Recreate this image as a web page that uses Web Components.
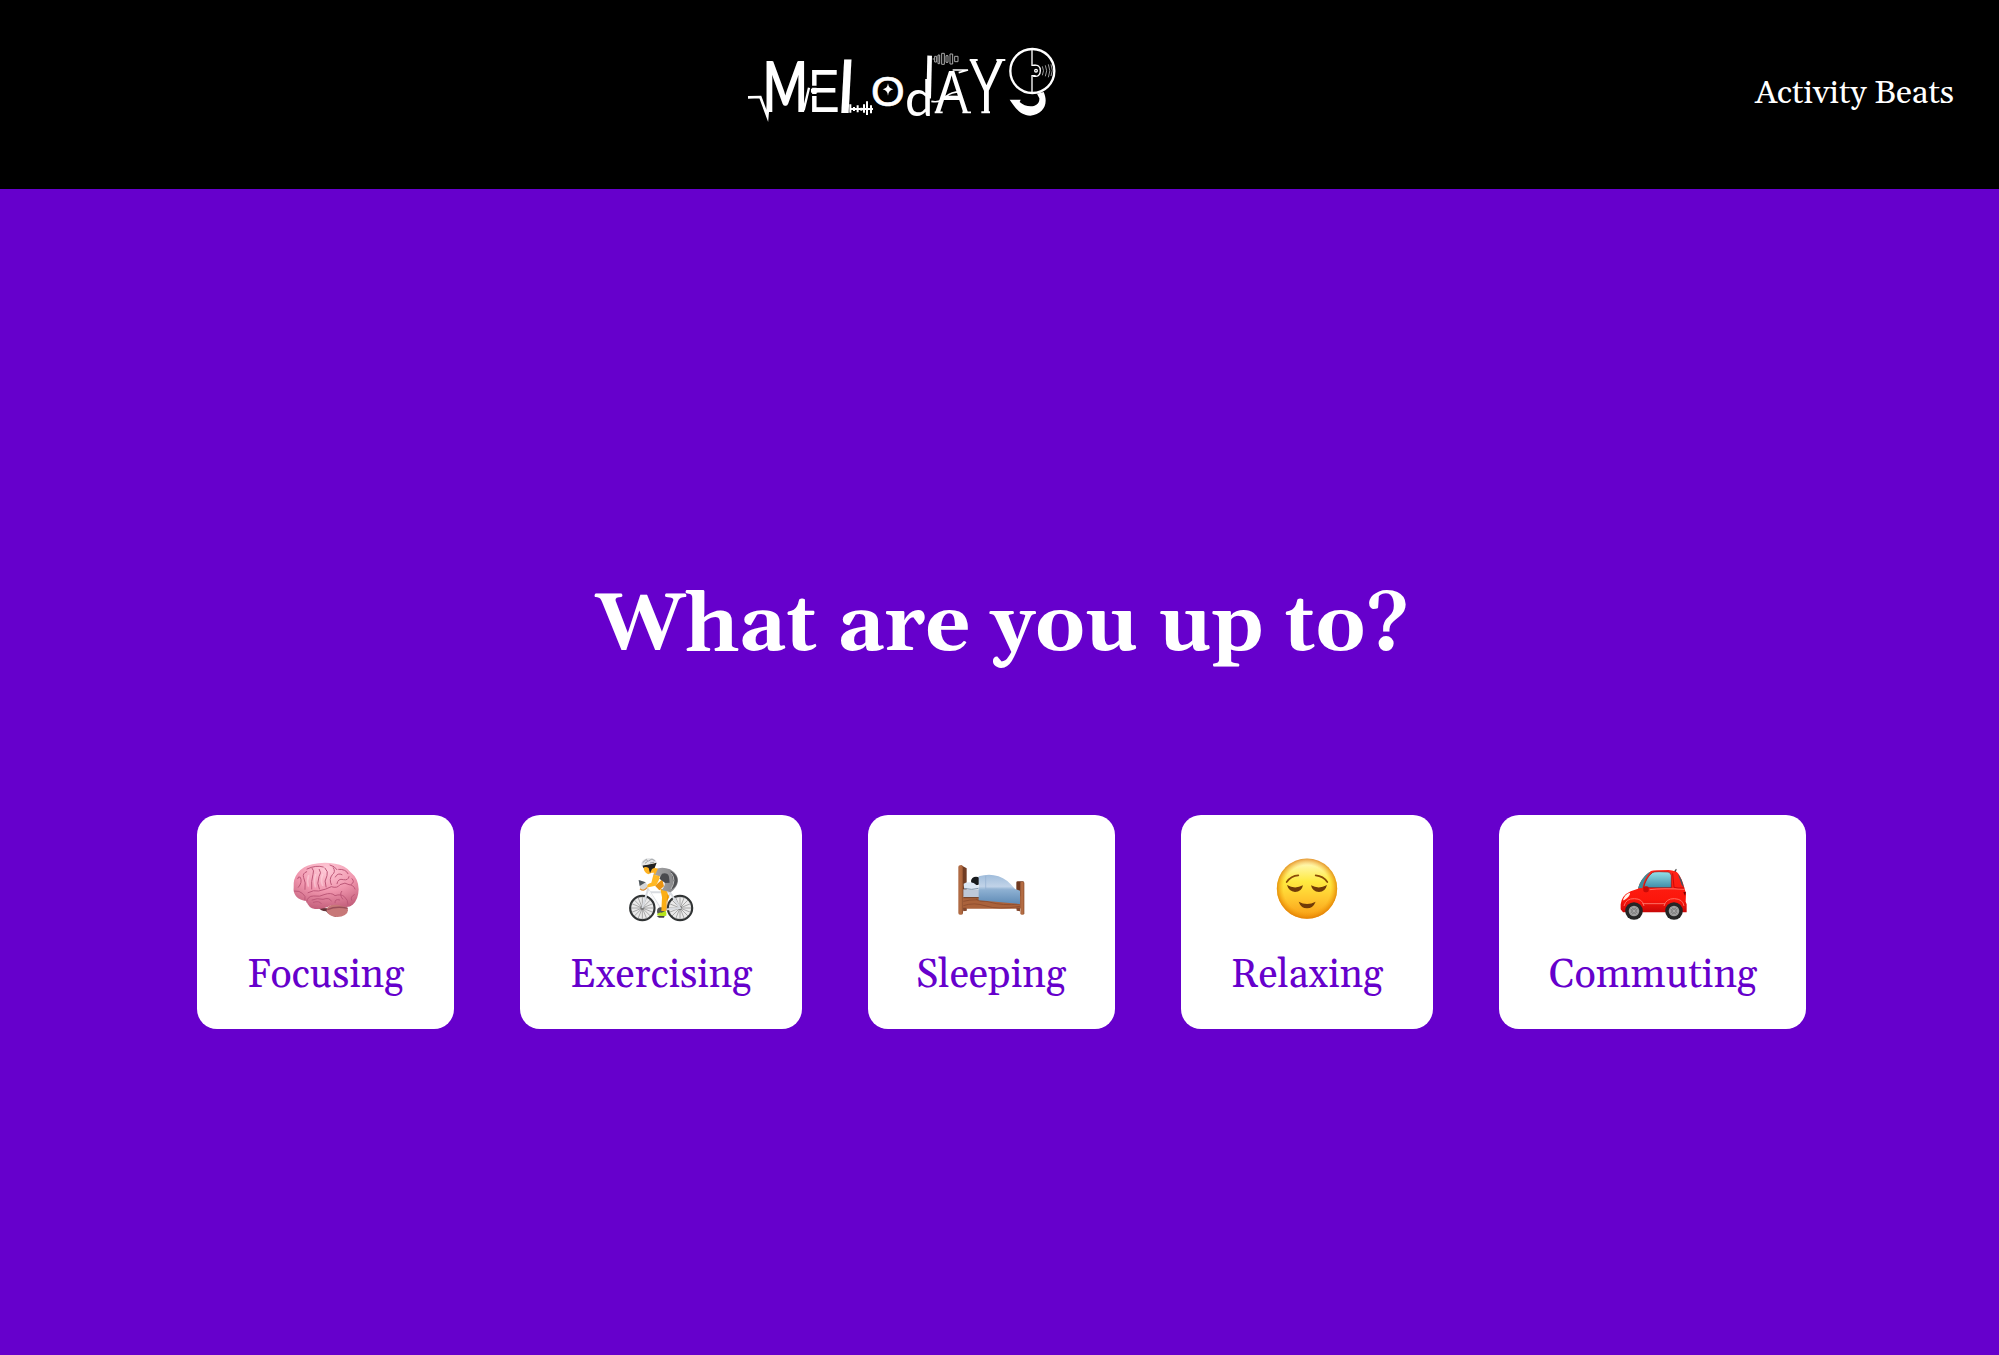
<!DOCTYPE html>
<html lang="en">
<head>
<meta charset="utf-8">
<title>Meloday</title>
<style>
html,body{margin:0;height:100%;background:#6600cc}
body{font-family:Georgia,Gelasio,"Liberation Serif",serif}
</style>
</head>
<body>
<melo-app></melo-app>
<script>
const define = (name, html, setup) => customElements.define(name, class extends HTMLElement {
  constructor() {
    super();
    this.attachShadow({ mode: 'open' }).innerHTML = html;
  }
  connectedCallback() { if (setup) setup(this); }
});

/* Text stretched to the width given in its "width" attribute. */
define('fit-text', `<style>:host{display:flex;white-space:nowrap}span{display:block;flex:none;transform-origin:0 0}</style><span><slot></slot></span>`, el => {
  const w = +el.getAttribute('width');
  el.style.width = w + 'px';
  const span = el.shadowRoot.querySelector('span');
  span.style.transform = `scaleX(${w / span.getBoundingClientRect().width})`;
});

define('melo-logo', `<style>:host{display:block;width:320px;height:100px}svg{display:block;width:100%;height:100%;overflow:visible}
text{fill:#fff;font-family:"Liberation Sans",sans-serif}</style>
<svg viewBox="0 0 960 300" role="img" aria-label="Meloday">
 <g fill="none" stroke="#fff" stroke-linejoin="miter">
  <path d="M24 187L61 186L82 243L90 150" stroke-width="8" stroke-miterlimit="8"/>
  <path d="M184 180L191 226L207 158" stroke-width="7"/>
 </g>
 <text style="font-family:Lato,sans-serif" transform="translate(68 230) scale(.67 1)" font-size="214" font-weight="bold">M</text>
 <text transform="translate(205 232) scale(.78 1)" font-size="181">E</text>
 <path d="M214 155H232M214 180H232" stroke="#000" stroke-width="6"/>
 <path d="M213 167H232" stroke="#fff" stroke-width="12"/>
 <text transform="translate(287 234) skewX(-3) scale(1.12 1)" font-size="222">l</text>
 <path d="M331 208V233M342 216V228M353 211V232M364 218V227M372 208V233M381 199V240M393 211V235M331 222H399" stroke="#fff" stroke-width="6"/>
 <text transform="translate(393 212)" font-size="130" stroke="#fff" stroke-width="2">O</text>
 <path d="M444 145Q446 161 460 163Q446 165 444 182Q442 165 428 163Q442 161 444 145Z" fill="#fff"/>
 <g transform="translate(480 0)">
  <text style="font-family:Lato,sans-serif" transform="translate(15 244)" font-size="152">d</text>
  <path d="M89 62L86 190" stroke="#fff" stroke-width="14"/>
  <g fill="none" stroke="#aaa" stroke-width="3"><path d="M98 72H104M104 64V81H110V64ZM114 60V86H119V60ZM125 55V88H133V55ZM138 62V82H144V62ZM150 57V87H158V57ZM164 64V80H174V64Z"/></g>
  <text transform="translate(106 232) scale(.82 1)" font-size="179">A</text>
  <path d="M94 199Q122 205 139 184Q153 171 181 170M104 232H128M187 232H213M158 105H204L176 113" stroke="#fff" stroke-width="5" fill="none"/>
  <text transform="translate(208 232) scale(.69 1)" font-size="224">Y</text>
  <path d="M209 75H233M289 75H316M244 232H270" stroke="#fff" stroke-width="6"/>
  <g fill="none" stroke="#fff"><circle cx="397" cy="108" r="66" stroke-width="7"/><path d="M396 44V91H407M396 174V122H407" stroke-width="4"/><path d="M399 91Q421 87 421 107Q421 128 399 123" stroke-width="4"/><path d="M427 94Q434 107 427 121M436 91Q444 107 436 124M445 88Q454 107 445 127M453 88Q461 107 453 123" stroke="#999" stroke-width="3"/></g>
  <circle cx="408" cy="107" r="6" fill="#fff"/><circle cx="408" cy="107" r="2"/>
  <path d="M329 194H362L359 201C378 220 420 220 418 190L411 176L431 171C447 206 430 239 391 242C360 242 344 216 329 194Z" fill="#fff"/>
 </g>
</svg>`);

define('melo-header', `<style>
:host{display:flex;height:189px;background:#000;color:#fff;box-sizing:border-box;padding:35px 45px 0 740px;justify-content:space-between;align-items:flex-start}
fit-text{font-size:32.5px;line-height:40px;margin-top:39px}
</style><melo-logo></melo-logo><fit-text width="199"><slot></slot></fit-text>`);

const icons = {
brain: `<svg viewBox="300 145 216 216"><defs><radialGradient id="b" cx=".5" cy=".15" r=".85"><stop stop-color="#ffcbd8"/><stop offset=".55" stop-color="#f095ad"/><stop offset="1" stop-color="#c4607c"/></radialGradient></defs>
<path d="M385 309L412 311L425 302L450 318L438 337Q420 333 408 320Q392 318 385 309Z" fill="#643238"/>
<ellipse cx="442" cy="317" rx="32" ry="20" fill="#c77878"/><path d="M412 315Q440 303 473 311" stroke="#994d59" stroke-width="4" fill="none"/>
<path d="M311 248Q309 223 323 205Q340 184 367 179Q400 170 435 177Q465 180 482 203Q505 221 506 254Q505 286 488 300Q475 311 456 304Q438 297 422 302Q403 315 375 313Q355 310 349 289Q330 288 318 275Q309 263 311 248Z" fill="url(#b)"/>
<g fill="none" stroke="#bd5878" stroke-width="3" stroke-linecap="round"><path d="M313 259Q329 258 337 266Q349 274 345 286M354 264Q371 255 386 259Q409 254 424 246Q442 252 450 240Q466 231 477 240Q490 240 495 253"/><path d="M350 292Q352 274 371 274Q391 277 402 270Q424 262 435 273Q453 267 463 276Q475 286 474 300M370 293Q389 287 394 297M366 286Q382 279 399 284Q418 277 424 289M435 294Q434 281 449 286M455 260Q447 270 458 283M493 270Q480 276 485 287"/><path d="M325 248Q338 233 331 218Q325 213 323 222M345 254Q348 232 341 219Q336 206 350 201M365 253Q363 230 369 209Q374 198 366 190M388 253Q379 237 387 216Q396 204 388 194M408 247Q401 228 411 213Q416 201 405 190M424 240Q416 223 427 210Q438 202 430 189M441 237Q444 220 460 225Q475 228 477 216M436 217Q443 203 456 210M446 194Q468 193 474 207M486 222Q496 232 484 239M351 193Q379 180 400 187M420 181Q434 184 441 195"/></g>
<path d="M356 213Q350 228 355 244M377 210Q371 227 376 246M398 210Q391 229 398 242" fill="none" stroke="#ffe0e7" stroke-width="5" stroke-linecap="round" opacity=".45"/></svg>`,
bike: `<svg viewBox="345 145 216 216"><defs><linearGradient id="s" x2="1"><stop stop-color="#a5a5a7"/><stop offset="1" stop-color="#858587"/></linearGradient></defs>
<g id="wheel"><circle cx="397" cy="310" r="36.5" fill="#e9e9e9" stroke="#303334" stroke-width="6.5"/><path d="M397 276V344M363 310H431M373 286L421 334M373 334L421 286M384 278L410 342M365 297L429 323M365 323L429 297M384 342L410 278" stroke="#858585" stroke-width="2"/><circle cx="397" cy="310" r="6" fill="#777"/></g><use href="#wheel" x="113"/>
<path d="M397 310L414 254L454 316L510 310L480 263L420 262M454 316L482 263" fill="none" stroke="#d8dbe0" stroke-width="6"/><path d="M416 258L449 312" stroke="#fafafa" stroke-width="4"/>
<circle cx="453" cy="320" r="12" fill="#555"/><path d="M440 334L465 331L462 339L447 339Z" fill="#444"/>
<path d="M468 255L478 278L470 288L467 319H454L456 278L451 252Z" fill="#fbae16"/><path d="M474 271L468 319" stroke="#dc8500" stroke-width="2"/><path d="M440 331Q447 322 455 324L467 318Q471 326 469 333Q452 336 440 331Z" fill="#b6e51b"/>
<path d="M435 243L457 224L462 245L448 257Z" fill="#ea9411"/>
<path d="M435 194Q456 184 480 194Q506 209 504 231Q500 249 482 263L454 256Q466 244 464 234L448 215L430 211Z" fill="url(#s)"/><path d="M456 207Q473 203 477 216L479 234L466 235L448 222Z" fill="#4a4b4f"/><path d="M481 198Q510 215 500 238Q496 249 484 255Q496 230 481 198Z" fill="#505154"/><path d="M484 205Q500 226 483 253" fill="none" stroke="#bbb" stroke-width="3"/>
<path d="M430 210L449 214Q448 231 436 243L409 249Q409 237 424 234Z" fill="#ffb824"/><path d="M386 226L407 233L413 244L401 256L390 250Z" fill="#d5d6d8"/><path d="M386 226L389 244L407 233Z" fill="#4e555a"/><path d="M390 252Q401 262 411 249" fill="none" stroke="#d98d36" stroke-width="4"/>
<path d="M401 184Q399 203 415 209L425 204L432 204L434 213L444 192L435 190L436 173Z" fill="#ffb321"/><path d="M397 182L440 174L434 189L426 193L420 206L416 190Q406 184 400 190Z" fill="#222"/>
<path d="M394 183Q392 164 414 161Q438 159 440 174Q423 179 394 183Z" fill="#e3e4e6"/><path d="M398 174L409 164L413 170L405 176M415 169L426 163L434 168M420 175L432 173" fill="none" stroke="#909599" stroke-width="2.5"/></svg>`,
bed: `<svg viewBox="287 145 216 216"><defs><linearGradient id="w"><stop stop-color="#ac6843"/><stop offset=".6" stop-color="#b66d42"/><stop offset="1" stop-color="#8d5030"/></linearGradient><linearGradient id="q" x2="0" y2="1"><stop stop-color="#9fbcdb"/><stop offset=".4" stop-color="#c1d3e8"/><stop offset=".52" stop-color="#8db0d2"/><stop offset="1" stop-color="#5f8bb6"/></linearGradient></defs>
<path d="M304 181L322 191V318H312V308H304Z" fill="#713d24"/><rect x="471" y="230" width="23" height="80" rx="4" fill="#70391f"/><path d="M311 275H484V312H311Z" fill="#aa623b"/><path d="M312 290Q350 280 390 292T481 298M312 303Q344 292 380 304T482 305M350 283Q366 296 386 286" fill="none" stroke="#8b4a2b" stroke-width="2.5"/>
<path d="M312 254H364V278H312Z" fill="#bdc8d9"/><path d="M312 279H364" stroke="#6c3b22" stroke-width="3"/><ellipse cx="350" cy="229" rx="15" ry="13" fill="#171a1d"/><path d="M313 237Q325 230 343 235L360 248Q350 257 314 250Z" fill="#dbe7f5"/><path d="M314 251Q338 257 358 251" fill="none" stroke="#8096ad" stroke-width="3"/>
<path d="M358 215Q405 200 444 229Q455 239 467 253L482 258V298L358 287Z" fill="url(#q)"/><path d="M379 213V253L467 254" stroke="#92afd0" stroke-width="2" fill="none"/>
<rect x="297" y="182" width="14" height="148" rx="5" fill="url(#w)"/><rect x="483" y="231" width="12" height="99" rx="4" fill="url(#w)"/><path d="M311 309H321V318L312 320ZM471 309H482V320L472 318Z" fill="#84482e"/></svg>`,
face: `<svg viewBox="304 145 216 216"><defs><linearGradient id="f" x2="0" y2="1"><stop stop-color="#fffbd8"/><stop offset=".14" stop-color="#fff59a"/><stop offset=".38" stop-color="#ffea40"/><stop offset=".68" stop-color="#ffc62e"/><stop offset="1" stop-color="#f79a14"/></linearGradient><radialGradient id="r"><stop offset=".78" stop-color="#f49b00" stop-opacity="0"/><stop offset="1" stop-color="#dc7800" stop-opacity=".75"/></radialGradient></defs><circle cx="412" cy="252" r="90.5" fill="url(#f)"/><circle cx="412" cy="252" r="90.5" fill="url(#r)"/><g fill="none" stroke="#8a4b06" stroke-width="5" stroke-linecap="round"><path d="M351 232Q364 213 386 212M438 212Q461 214 473 232"/></g><g fill="#703b08"><path d="M352 241Q375 255 400 242Q396 262 376 262Q357 260 352 241ZM424 242Q448 255 472 241Q467 261 448 262Q428 261 424 242Z"/><path d="M387 291Q412 305 438 291Q430 311 412 311Q394 311 387 291Z"/></g></svg>`,
car: `<svg viewBox="380 145 216 216"><defs><linearGradient id="c" x2="0" y2="1"><stop stop-color="#ff2419"/><stop offset=".7" stop-color="#fc160b"/><stop offset="1" stop-color="#c80707"/></linearGradient><linearGradient id="g" x2="0" y2="1"><stop stop-color="#95e0e9"/><stop offset="1" stop-color="#3e8da8"/></linearGradient></defs>
<path d="M548 204L557 192L559 194L555 208Z" fill="#454545"/><path d="M391 299Q394 272 421 260L443 252Q451 220 482 199Q491 196 535 196Q557 198 563 206Q575 221 583 253L587 267L586 291L589 299V323H398L391 314Z" fill="url(#c)"/>
<path d="M443 251Q450 223 474 204L481 201Q461 221 456 250Z" fill="#3f8b9a"/><path d="M460 249Q467 219 486 204Q490 201 506 201L533 202Q541 203 543 213V249Z" fill="url(#g)" stroke="#a20e09" stroke-width="2"/><path d="M563 208Q574 220 581 250L574 240Z" fill="#385a68"/>
<path d="M398 287Q402 269 419 264Q421 274 401 287Z" fill="#fff0e8"/><path d="M478 255Q518 250 582 254M456 297H524" fill="none" stroke="#ff8276" stroke-width="2.5"/><path d="M547 206L551 248Q561 251 582 250" fill="none" stroke="#b60000" stroke-width="2"/><path d="M579 263L587 261L584 273Z" fill="#7a0000"/><rect x="459" y="245" width="16" height="18" rx="6" fill="#c90a07"/>
<path d="M401 304Q407 281 432 282Q457 282 461 304M521 304Q527 281 552 282Q578 283 581 304" fill="none" stroke="#ff6d61" stroke-width="3"/>
<g id="tyre"><circle cx="431" cy="319" r="26.5" fill="#252525"/><circle cx="431" cy="319" r="16" fill="#999"/><circle cx="431" cy="319" r="9" fill="#777"/><path d="M431 305V333M417 319H445M421 309L441 329M421 329L441 309" stroke="#bbb" stroke-width="1.5"/></g><use href="#tyre" x="120"/></svg>`
};

define('activity-card', `<style>
:host{display:flex;flex-direction:column;align-items:center;box-sizing:border-box;height:214px;padding-top:38px;background:#fff;border-radius:20px;color:#6600cc;flex:none}
.icon,.icon svg{display:block;width:72px;height:72px}
fit-text{font-size:40px;line-height:48px;margin-top:27px}
</style><div class="icon"></div><fit-text></fit-text>`, el => {
  const r = el.shadowRoot, label = document.createElement('fit-text');
  el.style.width = el.getAttribute('size') + 'px';
  r.querySelector('.icon').innerHTML = icons[el.getAttribute('icon')];
  label.setAttribute('width', el.getAttribute('label-width'));
  label.textContent = el.getAttribute('label');
  r.querySelector('fit-text').replaceWith(label);
});

define('melo-app', `<style>
:host{display:flex;flex-direction:column;height:1355px;background:#6600cc;overflow:hidden}
main{display:flex;flex-direction:column;align-items:center;padding-top:390px}
h1{margin:0 0 0 5px;font-size:80px;line-height:96px;font-weight:bold;color:#fff}
.cards{display:flex;gap:66px;margin-top:140px;margin-left:4px}
</style>
<melo-header>Activity Beats</melo-header>
<main><h1><fit-text width="813">What are you up to?</fit-text></h1>
<div class="cards">
<activity-card icon="brain" label="Focusing" size="257" label-width="157"></activity-card>
<activity-card icon="bike" label="Exercising" size="281.5" label-width="182"></activity-card>
<activity-card icon="bed" label="Sleeping" size="247.5" label-width="150"></activity-card>
<activity-card icon="face" label="Relaxing" size="252" label-width="152"></activity-card>
<activity-card icon="car" label="Commuting" size="307" label-width="208"></activity-card>
</div></main>`);
</script>
</body>
</html>
